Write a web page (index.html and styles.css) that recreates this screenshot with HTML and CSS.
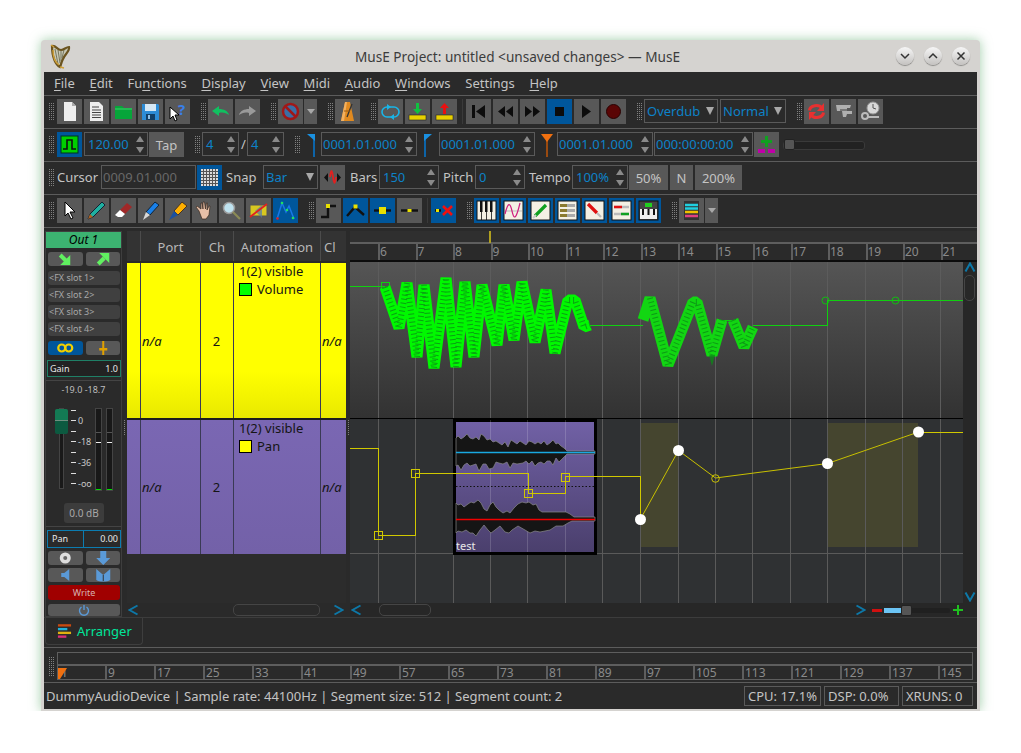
FILE: index.html
```html
<!DOCTYPE html>
<html lang="en">
<head>
    <meta charset="UTF-8">
    <title>MusE Project: untitled</title>
    <link rel="stylesheet" href="styles.css">
</head>
<body>
<div class="window">
    <!-- Title bar -->
    <div class="titlebar">
        <svg class="harp" viewBox="0 0 22 25" width="22" height="25">
            <path d="M3 2C7 1 8 6 12 6C15 6 17 3 20 3C21 7 16 10 14 15C12 19 12 21 11 23C7 21 3 14 3 2Z" fill="#c8c8b4"/>
            <path d="M6 5L9 20M9 6L11 19M12 7L12 17M15 6L13 14" stroke="#77775f" stroke-width="1"/>
            <path d="M3 2C7 1 8 6 12 6C15 6 17 3 20 3C21 7 16 10 14 15C12 19 12 21 11 23C7 21 3 14 3 2Z" fill="none" stroke="#6b5420" stroke-width="2.200"/>
            <path d="M2 1L5 3M11 23L15 24M4 6C4 14 7 19 10 21" fill="none" stroke="#d0a038" stroke-width="1.400"/>
        </svg>
        <span class="title-text">MusE Project: untitled &lt;unsaved changes&gt; — MusE</span>
        <div class="winbtns">
            <span class="winbtn"><svg viewBox="0 0 18 18" width="18" height="18"><path d="M5 7L9 11L13 7" fill="none" stroke="#333" stroke-width="1.500"/></svg></span>
            <span class="winbtn"><svg viewBox="0 0 18 18" width="18" height="18"><path d="M5 11L9 7L13 11" fill="none" stroke="#333" stroke-width="1.500"/></svg></span>
            <span class="winbtn"><svg viewBox="0 0 18 18" width="18" height="18"><path d="M5.500 5.500L12.500 12.500M12.500 5.500L5.500 12.500" fill="none" stroke="#333" stroke-width="1.500"/></svg></span>
        </div>
    </div>

    <div class="inner">
        <!-- Menu -->
        <div class="menubar">
            <span><u>F</u>ile</span><span><u>E</u>dit</span><span>Fu<u>n</u>ctions</span><span><u>D</u>isplay</span><span><u>V</u>iew</span><span><u>M</u>idi</span><span><u>A</u>udio</span><span><u>W</u>indows</span><span>Se<u>t</u>tings</span><span><u>H</u>elp</span>
        </div>

        <!-- Toolbar 1 -->
        <div class="toolrow">
            <i class="grip"></i>
            <b class="tb"><svg viewBox="0 0 25 25"><path d="M7 3h8l4 4v15H7z" fill="#eee"/><path d="M15 3v4h4z" fill="#aaa"/></svg></b>
            <b class="tb"><svg viewBox="0 0 25 25"><path d="M6 3h9l4 4v15H6z" fill="#eee"/><path d="M8 8h7M8 11h9M8 13.500h9M8 16h9M8 18.500h9" stroke="#444"/></svg></b>
            <b class="tb"><svg viewBox="0 0 25 25"><path d="M4 7h7l2 2h8v11H4z" fill="#07a53a"/><path d="M4 10h17" stroke="#3fd06b"/></svg></b>
            <b class="tb"><svg viewBox="0 0 25 25"><path d="M4 5h16l1 1v15H4z" fill="#2d8cd6"/><rect x="7" y="5" width="11" height="7" fill="#d6e8f5"/><rect x="8" y="15" width="9" height="6" fill="#123f66"/><rect x="10" y="16" width="2" height="4" fill="#8fc0e6"/></svg></b>
            <b class="tb"><svg viewBox="0 0 25 25"><path d="M5 8v12l3-3 2 5 2-1-2-5h4z" fill="#fff" stroke="#000"/><text x="13" y="16" class="qmark">?</text></svg></b>
            <i class="grip"></i>
            <b class="tb"><svg viewBox="0 0 25 25"><path d="M4 12l7-5v3c5 0 9 2 10 6-3-2-6-3-10-2v3z" fill="#10c060"/></svg></b>
            <b class="tb"><svg viewBox="0 0 25 25"><path d="M21 12l-7-5v3c-5 0-9 2-10 6 3-2 6-3 10-2v3z" fill="#9a9a9a"/></svg></b>
            <i class="grip"></i>
            <b class="tb"><svg viewBox="0 0 25 25"><circle cx="12.500" cy="12.500" r="7.500" fill="#3a6ea5" stroke="#a01818" stroke-width="2.500"/><path d="M7 7l11 11" stroke="#a01818" stroke-width="2.500"/></svg></b>
            <b class="tb-arrow"><em class="tri-d"></em></b>
            <i class="grip"></i>
            <b class="tb"><svg viewBox="0 0 25 25"><path d="M10 3h5l4 19H6z" fill="#e08a20"/><path d="M10 3h2L9 22H6z" fill="#f2b060"/><path d="M12 18L17 5" stroke="#333" stroke-width="1.300"/><path d="M9 12h6" stroke="#9a5a10"/></svg></b>
            <i class="grip"></i>
            <b class="tb"><svg viewBox="0 0 25 25"><rect x="4" y="8" width="17" height="10" rx="5" fill="none" stroke="#19b5e8" stroke-width="1.600"/><path d="M9 5l4 3-4 3zM16 15l-4 3 4 3z" fill="#19b5e8"/></svg></b>
            <b class="tb"><svg viewBox="0 0 25 25"><rect x="4" y="16" width="17" height="5" fill="#e8d000" stroke="#222" stroke-width=".6"/><path d="M11 4h3v6h3l-4.500 5L8 10h3z" fill="#10c040"/></svg></b>
            <b class="tb"><svg viewBox="0 0 25 25"><rect x="4" y="16" width="17" height="5" fill="#e8d000" stroke="#222" stroke-width=".6"/><path d="M11 15V9H8l4.500-5L17 9h-3v6z" fill="#e81010"/></svg></b>
            <i class="vsep"></i>
            <b class="tb"><svg viewBox="0 0 25 25"><path d="M6 6h3v13H6zM19 6v13l-9-6.500z" fill="#0c0c0c"/></svg></b>
            <b class="tb"><svg viewBox="0 0 25 25"><path d="M12 7v11l-7-5.500zM20 7v11l-7-5.500z" fill="#0c0c0c"/></svg></b>
            <b class="tb"><svg viewBox="0 0 25 25"><path d="M5 7v11l7-5.500zM13 7v11l7-5.500z" fill="#0c0c0c"/></svg></b>
            <b class="tb on"><svg viewBox="0 0 25 25"><rect x="8" y="8" width="9" height="9" fill="#0c0c0c"/></svg></b>
            <b class="tb"><svg viewBox="0 0 25 25"><path d="M8 6v13l9-6.500z" fill="#0c0c0c"/></svg></b>
            <b class="tb"><svg viewBox="0 0 25 25"><circle cx="12.500" cy="12.500" r="7" fill="#5a0505" stroke="#2a0202"/></svg></b>
            <i class="grip"></i>
            <div class="combo w74">Overdub<em class="tri-d big"></em></div>
            <div class="combo w66">Normal<em class="tri-d big"></em></div>
            <i class="grip"></i>
            <b class="tb"><svg viewBox="0 0 25 25"><path d="M5.500 11.500C6 6 15 5 18 9" fill="none" stroke="#e83030" stroke-width="3"/><path d="M20 4v8h-7z" fill="#e83030"/><path d="M19.500 13.500C19 19 10 20 7 16" fill="none" stroke="#e83030" stroke-width="3"/><path d="M5 21v-8h7z" fill="#e83030"/></svg></b>
            <b class="tb"><svg viewBox="0 0 25 25"><path d="M5 6h15l-1 3h-3v3h5v3h-5l-1 3h-3l-1-6H6z" fill="#b0b0b0"/><path d="M9 11h7" stroke="#777" stroke-width="2"/></svg></b>
            <b class="tb"><svg viewBox="0 0 25 25"><circle cx="15" cy="9" r="6" fill="#d8d8d8" stroke="#999"/><path d="M15 5v4l3 1" stroke="#555" fill="none"/><circle cx="7" cy="17" r="3" fill="none" stroke="#bbb" stroke-width="2"/><path d="M10 17h11v2H10z" fill="#bbb"/></svg></b>
        </div>

        <!-- Toolbar 2 -->
        <div class="toolrow">
            <i class="grip"></i>
            <b class="tb on"><svg viewBox="0 0 25 25"><rect x="4" y="4" width="17" height="17" fill="#00d000" stroke="#032"/><path d="M6 17h4V8h5v9h4" fill="none" stroke="#111" stroke-width="1.600"/></svg></b>
            <div class="spin w64">120.00<span class="arrows"></span></div>
            <b class="tb txt w35 pull">Tap</b>
            <i class="grip"></i>
            <div class="spin w37">4<span class="arrows"></span></div>
            <span class="slash">/</span>
            <div class="spin w37">4<span class="arrows"></span></div>
            <i class="grip"></i>
            <svg class="flag f1" viewBox="0 0 12 25" width="12" height="25"><path d="M10 2h2v23h-2z" fill="#0d64a8"/><path d="M12 2v7L4 2z" fill="#1a90e0"/></svg>
            <div class="spin w96 snug">0001.01.000<span class="arrows"></span></div>
            <svg class="flag f2" viewBox="0 0 12 25" width="12" height="25"><path d="M1 2h2v23H1z" fill="#0d64a8"/><path d="M1 2v7l8-7z" fill="#1a90e0"/></svg>
            <div class="spin w96 snug">0001.01.000<span class="arrows"></span></div>
            <svg class="flag f2" viewBox="0 0 12 25" width="12" height="25"><path d="M5 4h2v21H5z" fill="#9a4a10"/><path d="M0 2h12L6 10z" fill="#f07010"/></svg>
            <div class="spin w96 snug">0001.01.000<span class="arrows"></span></div>
            <div class="spin w99 snug pull">000:00:00:00<span class="arrows"></span></div>
            <b class="tb pull"><svg viewBox="0 0 25 25"><path d="M11 4h3v4h4v3h-4v4h-3v-4H7V8h4z" fill="#10a020"/><path d="M4 17h7v4H4zM14 17h7v4h-7z" fill="#c000a8"/></svg></b>
            <div class="hslider"><span class="knob"></span></div>
        </div>

        <!-- Toolbar 3 -->
        <div class="toolrow">
            <i class="grip"></i>
            <span class="label l-cursor">Cursor</span>
            <div class="spin w95 disabled">0009.01.000</div>
            <b class="tb on pull"><svg viewBox="0 0 25 25"><rect x="4" y="4" width="17" height="17" fill="#ddd"/><path d="M6.500 4v17M9.500 4v17M12.500 4v17M15.500 4v17M18.500 4v17M4 6.500h17M4 9.500h17M4 12.500h17M4 15.500h17M4 18.500h17" stroke="#555"/></svg></b>
            <span class="label l-snap">Snap</span>
            <div class="combo w54">Bar<em class="tri-d big"></em></div>
            <b class="tb"><svg viewBox="0 0 25 25"><path d="M4 12.500L8 8v9zM21 12.500L17 8v9z" fill="#111"/><path d="M10 12c1-8 2-8 3 0s2 8 3 0" fill="none" stroke="#e02020" stroke-width="1.800"/></svg></b>
            <span class="label l-bars">Bars</span>
            <div class="spin w60">150<span class="arrows"></span></div>
            <span class="label l-pitch">Pitch</span>
            <div class="spin w50">0<span class="arrows"></span></div>
            <span class="label l-tempo">Tempo</span>
            <div class="spin w56">100%<span class="arrows"></span></div>
            <b class="tb txt w39 pull">50%</b>
            <b class="tb txt w23">N</b>
            <b class="tb txt w47">200%</b>
        </div>

        <!-- Toolbar 4 -->
        <div class="toolrow">
            <i class="grip"></i>
            <b class="tb"><svg viewBox="0 0 25 25"><path d="M8 4v14l3-3 3 6 2-1-3-6h5z" fill="#fff" stroke="#000"/></svg></b>
            <b class="tb"><svg viewBox="0 0 25 25"><path d="M18 4l3 3L9 19l-5 2 2-5z" fill="#20b0a0" stroke="#123"/><path d="M4 21l2-5 3 3z" fill="#b06020"/></svg></b>
            <b class="tb"><svg viewBox="0 0 25 25"><path d="M16 5l5 4-7 7-5-4z" fill="#a02828"/><path d="M9 12l5 4-3 3H7l-3-2z" fill="#fff"/></svg></b>
            <b class="tb"><svg viewBox="0 0 25 25"><path d="M17 4l4 3-9 10-4-3z" fill="#1a80e8" stroke="#123"/><path d="M8 14l4 3-7 5z" fill="#d8d8d8"/></svg></b>
            <b class="tb"><svg viewBox="0 0 25 25"><path d="M17 4l5 4-9 9-4-4z" fill="#ffb000" stroke="#432"/><path d="M9 13l4 4-9 5z" fill="#1a50a0"/></svg></b>
            <b class="tb"><svg viewBox="0 0 25 25"><path d="M7 13L4 9l1-1 4 3V5h1l1 6V4h1.500l1 7 1-6h1l-.5 7 2-4h1l-1 9-3 4H10z" fill="#e8c0a8" stroke="#3a2a20" stroke-width=".7"/></svg></b>
            <b class="tb"><svg viewBox="0 0 25 25"><circle cx="10" cy="10" r="5.500" fill="#bfe3f0" stroke="#999" stroke-width="1.500"/><path d="M14 14l7 7" stroke="#8a8a55" stroke-width="2.200"/></svg></b>
            <b class="tb"><svg viewBox="0 0 25 25"><rect x="4" y="7" width="17" height="11" fill="#d8c820" stroke="#555"/><path d="M9 13l7-6v13z" fill="#5577aa" opacity=".7"/><path d="M4 19L21 6" stroke="#e02020" stroke-width="1.800"/></svg></b>
            <b class="tb on"><svg viewBox="0 0 25 25"><path d="M4 21L9 5l4 9 3-6 5 13" fill="none" stroke="#1878e8" stroke-width="1.500"/><circle cx="4.500" cy="20.500" r="1.300" fill="#e02020"/><circle cx="9" cy="5" r="1.300" fill="#20e060"/><circle cx="14" cy="12" r="1.300" fill="#20e060"/><circle cx="20" cy="20" r="1.300" fill="#20e060"/></svg></b>
            <i class="grip"></i>
            <b class="tb"><svg viewBox="0 0 25 25"><path d="M5 19h7V8h8" fill="none" stroke="#111" stroke-width="2.400"/><rect x="10" y="6" width="4" height="4" fill="#e8e000"/></svg></b>
            <b class="tb on"><svg viewBox="0 0 25 25"><path d="M4 18l8-9 9 8" fill="none" stroke="#111" stroke-width="2.400"/><rect x="10.500" y="6.500" width="4" height="4" fill="#e8e000"/></svg></b>
            <b class="tb on"><svg viewBox="0 0 25 25"><path d="M4 12.500h17" stroke="#111" stroke-width="2.400"/><rect x="9" y="9" width="7" height="7" fill="#e8e000"/></svg></b>
            <b class="tb"><svg viewBox="0 0 25 25"><path d="M4 12.500h17" stroke="#111" stroke-width="2.400"/><rect x="10.500" y="11" width="4" height="3" fill="#e8e000"/></svg></b>
            <i class="vsep"></i>
            <b class="tb on"><svg viewBox="0 0 25 25"><path d="M4 12.500h6" stroke="#111" stroke-width="2.400"/><rect x="5" y="11" width="3" height="3" fill="#e8e000"/><path d="M12 8l9 9M21 8l-9 9" stroke="#f01010" stroke-width="2.600"/></svg></b>
            <i class="grip"></i>
            <b class="tb on"><svg viewBox="0 0 25 25"><rect x="3" y="3" width="19" height="19" fill="#f4f0e4" stroke="#111"/><path d="M6 3h2.500v11H6zM11 3h2.500v11H11zM16 3h2.500v11H16z" fill="#111"/><path d="M7.500 14v8M12.500 14v8M17.500 14v8" stroke="#111" stroke-width=".8"/></svg></b>
            <b class="tb on"><svg viewBox="0 0 25 25"><rect x="3" y="3" width="19" height="19" fill="#f4f0e4" stroke="#111"/><path d="M4 13h17" stroke="#bbb"/><path d="M4 16c3-12 5-12 7-3s4 9 8-8" fill="none" stroke="#d02080" stroke-width="1.200"/></svg></b>
            <b class="tb on"><svg viewBox="0 0 25 25"><rect x="3" y="3" width="19" height="19" fill="#f4f0e4" stroke="#111"/><path d="M7 18L18 7" stroke="#10a020" stroke-width="3.200"/><path d="M5 20l3-3" stroke="#ccc" stroke-width="2"/></svg></b>
            <b class="tb on"><svg viewBox="0 0 25 25"><rect x="3" y="3" width="19" height="19" fill="#f4f0e4" stroke="#111"/><path d="M5 7.500h15M5 12.500h15M5 17.500h15" stroke="#aaa" stroke-width="3"/><path d="M5 7.500h7M5 12.500h7M5 17.500h7" stroke="#8a7a30" stroke-width="3"/></svg></b>
            <b class="tb on"><svg viewBox="0 0 25 25"><rect x="3" y="3" width="19" height="19" fill="#f4f0e4" stroke="#111"/><path d="M6 6l9 9" stroke="#e01010" stroke-width="3.200"/><path d="M15 15l4 4" stroke="#bbb" stroke-width="2.200"/></svg></b>
            <b class="tb on"><svg viewBox="0 0 25 25"><rect x="3" y="3" width="19" height="19" fill="#f4f0e4" stroke="#111"/><path d="M5 9h15M5 16h15" stroke="#bbb" stroke-width="2.500"/><path d="M5 9h8" stroke="#e01010" stroke-width="2.500"/><path d="M12 16h8" stroke="#10a020" stroke-width="2.500"/></svg></b>
            <b class="tb on"><svg viewBox="0 0 25 25"><rect x="3" y="3" width="19" height="19" fill="#444" stroke="#111"/><rect x="4" y="11" width="17" height="10" fill="#eee"/><path d="M6 11h2v6H6zM11.500 11h2v6h-2zM17 11h2v6h-2z" fill="#111"/><rect x="9" y="5" width="7" height="4" fill="#20d020"/></svg></b>
            <i class="grip"></i>
            <b class="tb"><svg viewBox="0 0 25 25"><rect x="5" y="3" width="15" height="19" fill="#333"/><path d="M6 7h13" stroke="#20d0e0" stroke-width="2.500"/><path d="M6 10.500h13" stroke="#20d0e0" stroke-width="2.500"/><path d="M6 14h13" stroke="#f0c000" stroke-width="2.500"/><path d="M6 18h13" stroke="#e04080" stroke-width="2.500"/></svg></b>
            <b class="tb-arrow"><em class="tri-d"></em></b>
        </div>

        <!-- Main area -->
        <div class="main">
            <div class="strip">
                <div class="strip-head">Out 1</div>
                <div class="sbtns mt4">
                    <b class="sb"><svg viewBox="0 0 34 14"><path d="M12 3l6 6" stroke="#60f060" stroke-width="4"/><path d="M22 3v10H12z" fill="#60f060"/></svg></b>
                    <b class="sb"><svg viewBox="0 0 34 14"><path d="M12 12l6-6" stroke="#60f060" stroke-width="4"/><path d="M13 1h10v10z" fill="#60f060"/></svg></b>
                </div>
                <div class="fx mt5">&lt;FX slot 1&gt;</div>
                <div class="fx">&lt;FX slot 2&gt;</div>
                <div class="fx">&lt;FX slot 3&gt;</div>
                <div class="fx">&lt;FX slot 4&gt;</div>
                <div class="sbtns mt5">
                    <b class="sb on"><svg viewBox="0 0 34 14"><circle cx="13.500" cy="7" r="3.500" fill="none" stroke="#f0d000" stroke-width="2.200"/><circle cx="20.500" cy="7" r="3.500" fill="none" stroke="#f0d000" stroke-width="2.200"/></svg></b>
                    <b class="sb"><svg viewBox="0 0 34 14"><path d="M16 0h2v14h-2zM13 7h8v2.500h-8z" fill="#e0a000"/></svg></b>
                </div>
                <div class="gain"><span>Gain</span><span>1.0</span></div>
                <div class="rule mt3"></div>
                <div class="dbs">-19.0 -18.7</div>
                <div class="fader-area">
                    <div class="fader"><span class="fader-knob"></span></div>
                    <div class="scale">
                        <span></span><span>0</span><span></span><span>-18</span><span></span><span>-36</span><span></span><span>-oo</span>
                    </div>
                    <div class="meter"></div>
                    <div class="meter"></div>
                </div>
                <div class="dbbox">0.0 dB</div>
                <div class="rule mt3"></div>
                <div class="pan"><span class="pan-l">Pan</span><span class="pan-r">0.00</span></div>
                <div class="sbtns mt3">
                    <b class="sb"><svg viewBox="0 0 34 14"><circle cx="17" cy="7" r="5.500" fill="#ddd"/><circle cx="17" cy="7" r="2" fill="#666"/></svg></b>
                    <b class="sb"><svg viewBox="0 0 34 14"><path d="M14 0h6v7h4l-7 7-7-7h4z" fill="#5a9ad8"/></svg></b>
                </div>
                <div class="sbtns mt3">
                    <b class="sb"><svg viewBox="0 0 34 14"><path d="M13 5h3l5-4v12l-5-4h-3z" fill="#5a9ad8"/></svg></b>
                    <b class="sb"><svg viewBox="0 0 34 14"><path d="M10 1l7 6 7-6v11c-3 2-11 2-14 0z" fill="#5a9ad8"/><path d="M17 7v6" stroke="#333"/></svg></b>
                </div>
                <div class="writebtn">Write</div>
                <b class="sb power"><svg viewBox="0 0 72 12"><path d="M33.500 3a4.500 4.500 0 1 0 5 0" fill="none" stroke="#5a9ad8" stroke-width="1.400"/><path d="M36 1v5" stroke="#5a9ad8" stroke-width="1.400"/></svg></b>
            </div>

            <i class="split wide"><i class="split-dots"></i></i>

            <div class="tracks">
                <div class="thead">
                    <span class="c0"></span><span class="c1">Port</span><span class="c2">Ch</span><span class="c3">Automation</span><span class="c4 clip">Cl</span>
                </div>
                <div class="trow yellow">
                    <span class="c0"></span>
                    <span class="c1 na">n/a</span>
                    <span class="c2 mid">2</span>
                    <span class="c3 auto"><span>1(2) visible</span><span class="ctrl"><em class="swatch green"></em>Volume</span></span>
                    <span class="c4 na">n/a</span>
                </div>
                <div class="trow purple">
                    <span class="c0"></span>
                    <span class="c1 na">n/a</span>
                    <span class="c2 mid">2</span>
                    <span class="c3 auto"><span>1(2) visible</span><span class="ctrl"><em class="swatch ylw"></em>Pan</span></span>
                    <span class="c4 na">n/a</span>
                </div>
                <div class="tfill"></div>
                <div class="hbar">
                    <svg class="chev" viewBox="0 0 10 12" width="10" height="12"><path d="M9.500 1.500L1.500 6L9.500 10.500"/></svg>
                    <span class="handle h-tracks"></span>
                    <svg class="chev" viewBox="0 0 10 12" width="10" height="12"><path d="M.5 1.500L8.500 6L.5 10.500"/></svg>
                </div>
            </div>

            <i class="split"><i class="split-dots"></i></i>

            <div class="arr">
                <div class="ruler">
                    <div class="ruler-top"></div>
                    <div class="ruler-marks">
                        <span class="lead"></span><span>6</span><span>7</span><span>8</span><span>9</span><span>10</span><span>11</span><span>12</span><span>13</span><span>14</span><span>15</span><span>16</span><span>17</span><span>18</span><span>19</span><span>20</span><span>21</span>
                    </div>
                    <i class="playhead"></i>
                </div>
                <div class="arr-body">
                    <svg class="canvas" viewBox="350 262 613 341" width="613" height="341">
                        <defs>
                            <linearGradient id="t1" x1="0" y1="0" x2="0" y2="1"><stop offset="0" stop-color="#555"/><stop offset="1" stop-color="#323232"/></linearGradient>
                            <linearGradient id="pt" x1="0" y1="0" x2="0" y2="1"><stop offset="0" stop-color="#7161a6"/><stop offset="1" stop-color="#4a3f6c"/></linearGradient>
                        </defs>
                        <rect x="350" y="262" width="613" height="156" fill="url(#t1)"/>
                        <rect x="350" y="419" width="613" height="184" fill="#2f3133"/>
                        <path d="M378.500 262V418M415.500 262V418M453.500 262V418M490.500 262V418M527.500 262V418M565.500 262V418M602.500 262V418M640.500 262V418M678.500 262V418M715.500 262V418M752.500 262V418M790.500 262V418M827.500 262V418M865.500 262V418M902.500 262V418M940.500 262V418" stroke="#5c5c5c"/>
                        <path d="M350 418.500H963" stroke="#000"/>
                        <rect x="640" y="423" width="38" height="124" fill="#45452f"/>
                        <rect x="827" y="423" width="91" height="124" fill="#45452f"/>
                        <path d="M378.500 419V603M415.500 419V603M453.500 419V603M490.500 419V603M527.500 419V603M565.500 419V603M602.500 419V603M640.500 419V603M678.500 419V603M715.500 419V603M752.500 419V603M790.500 419V603M827.500 419V603M865.500 419V603M902.500 419V603M940.500 419V603" stroke="#5a5a5a"/>
                        <path d="M350 553.500H963" stroke="#5a5a5a"/>

                        <!-- audio part -->
                        <rect x="454.500" y="420.500" width="141" height="133" fill="url(#pt)" stroke="#000" stroke-width="3"/>
                        <path d="M490.500 420V552M527.500 420V552M565.500 420V552" stroke="#fff" stroke-opacity=".16"/>
                        <path class="wav" d="M456 438L458 436L461 439L464 437L467 434L470 438L473 439L476 437L479 440L481 434L484 436L487 440L490 439L493 442L496 441L499 443L502 445L505 442L508 447L511 440L514 442L517 444L520 441L523 443L526 445L529 441L532 442L535 444L538 442L541 444L544 441L547 445L550 443L553 440L556 444L558 443L561 446L564 448L567 451L572 451L595 451L595 454L572 454L567 454L563 458L559 462L556 458L553 465L550 461L547 461L544 464L541 462L538 463L535 466L532 461L529 464L526 461L523 463L517 464L513 463L510 468L507 462L503 464L499 463L496 462L493 468L489 469L486 464L483 464L479 471L476 464L473 465L470 466L467 463L464 465L461 470L458 465L456 466Z"/>
                        <path d="M456 486.500H595" stroke="#111" stroke-dasharray="1.500 2"/>
                        <path class="wav" d="M456 503L458 505L461 504L464 507L468 504L471 502L474 503L478 500L481 503L484 509L487 511L490 505L493 502L496 507L499 510L503 513L507 511L510 513L514 508L518 504L522 502L526 503L529 502L533 505L536 504L539 510L542 512L566 512L570 514L574 517L595 517L595 521L572 521L568 523L563 526L556 526L550 530L545 531L540 532L535 531L530 533L525 530L518 526L512 530L509 533L505 532L500 526L495 530L491 533L488 530L484 525L480 530L476 536L473 533L470 533L466 530L462 532L458 531L456 533Z"/>
                        <path d="M456 452.500H595" stroke="#19a8e0" stroke-width="1.300"/>
                        <path d="M456 519.500H595" stroke="#f00000" stroke-width="1.300"/>
                        <text x="456" y="550" class="part-name">test</text>

                        <!-- volume automation -->
                        <path class="vol-line" d="M350 286.500H385M590 325.500H643M722 320.500H733M753 325.500H827.500V300.500H963"/>
                        <rect class="vol-line" x="381.500" y="282.500" width="8" height="8"/>
                        <path class="mesh" d="M385 287L399 328L407 283L417 357L424 285L434 368L446 278L456 367L465 282L474 357L482 285L497 345L504 285L514 340L522 282L535 342L546 290L555 353L568 300L575 300L584 327L590 325"/>
                        <path class="mesh-d" d="M385 287L399 328L407 283L417 357L424 285L434 368L446 278L456 367L465 282L474 357L482 285L497 345L504 285L514 340L522 282L535 342L546 290L555 353L568 300L575 300L584 327L590 325"/>
                        <path class="mesh dim" d="M643 320L650 298L668 365L693 302L697 302L712 355L722 320M733 320L744 347L753 327"/>
                        <path class="mesh-d" d="M650 298L668 365L693 302L697 302L712 355L722 320M733 320L744 347L753 327"/>
                        <circle cx="825.500" cy="300.500" r="3.500" fill="none" stroke="#10c010"/>
                        <circle cx="895.500" cy="300.500" r="3.500" fill="none" stroke="#10c010"/>

                        <!-- pan automation -->
                        <path class="pan-line" d="M350 448.500H378.500V535.500H415.500V473.500H528.500V493.500H565.500V476.500H640.500V519"/>
                        <path class="pan-thin" d="M640.500 519L678.500 450.500L715.500 478L827.500 463.500L918.500 432"/>
                        <path class="pan-line" d="M918.500 432.500H963"/>
                        <rect x="374.500" y="531.500" width="8" height="8" class="pan-line"/>
                        <rect x="411.500" y="469.500" width="8" height="8" class="pan-line"/>
                        <rect x="524.500" y="489.500" width="8" height="8" class="pan-line"/>
                        <rect x="561.500" y="473.500" width="8" height="8" class="pan-line"/>
                        <circle cx="640.500" cy="519.500" r="5.500" fill="#fff"/>
                        <circle cx="678.500" cy="450.500" r="5.500" fill="#fff"/>
                        <circle cx="715.500" cy="478.500" r="3.800" fill="none" stroke="#c8c000"/>
                        <circle cx="827.500" cy="463.500" r="5.500" fill="#fff"/>
                        <circle cx="918.500" cy="432" r="5.500" fill="#fff"/>
                    </svg>
                    <div class="vbar">
                        <svg class="chev" viewBox="0 0 12 10" width="12" height="10"><path d="M1.500 9.500L6 1.500L10.500 9.500"/></svg>
                        <span class="handle v-handle"></span>
                        <svg class="chev lower" viewBox="0 0 12 10" width="12" height="10"><path d="M1.500.5L6 8.500L10.500.5"/></svg>
                    </div>
                </div>
                <div class="hbar arr-bar">
                    <svg class="chev" viewBox="0 0 10 12" width="10" height="12"><path d="M9.500 1.500L1.500 6L9.500 10.500"/></svg>
                    <span class="handle h-arr"></span>
                    <svg class="chev end" viewBox="0 0 10 12" width="10" height="12"><path d="M.5 1.500L8.500 6L.5 10.500"/></svg>
                    <span class="minus"></span>
                    <div class="zoom"><span class="zoom-fill"></span><span class="knob"></span></div>
                    <svg class="plus" viewBox="0 0 10 10" width="10" height="10"><path d="M4 0h2v4h4v2H6v4H4V6H0V4h4z" fill="#20c020"/></svg>
                </div>
            </div>
        </div>

        <!-- Tabs -->
        <div class="tabbar">
            <div class="tab">
                <svg viewBox="0 0 16 16" width="15" height="16"><path d="M1 2h14" stroke="#c84a10" stroke-width="2.500"/><path d="M1 6h10" stroke="#20b0d8" stroke-width="2.500"/><path d="M1 10h14" stroke="#e0b010" stroke-width="2.500"/><path d="M1 14h9" stroke="#d83078" stroke-width="2.500"/></svg>
                <span>Arranger</span>
            </div>
        </div>

        <!-- Bottom ruler -->
        <div class="overview">
            <i class="grip tall"></i>
            <div class="ov-box">
                <div class="ov-top"></div>
                <div class="ov-marks">
                    <span class="first">1</span><span>9</span><span>17</span><span>25</span><span>33</span><span>41</span><span>49</span><span>57</span><span>65</span><span>73</span><span>81</span><span>89</span><span>97</span><span>105</span><span>113</span><span>121</span><span>129</span><span>137</span><span>145</span>
                </div>
                <svg class="ov-pos" viewBox="0 0 9 11" width="9" height="11"><path d="M0 0h9L2 11H0z" fill="#f07010"/></svg>
            </div>
        </div>

        <!-- Status bar -->
        <div class="statusbar">
            <span class="status-text">DummyAudioDevice | Sample rate: 44100Hz | Segment size: 512 | Segment count: 2</span>
            <span class="stat s-cpu">CPU: 17.1%</span>
            <span class="stat s-dsp">DSP: 0.0%</span>
            <span class="stat s-xr">XRUNS: 0</span>
        </div>
    </div>
</div>
</body>
</html>
```

FILE: styles.css
```css
/* General Styles */
body {
    font-family: "Noto Sans", sans-serif;
    font-size: 13px;
    background-color: #ffffff;
    margin: 0;
    padding: 40px 0 0 41px;
    color: #c4c4c4;
    overflow: hidden;
}

b, i, em {
    font-weight: normal;
    font-style: normal;
}

.window {
    width: 939px;
    height: 671px;
    background-color: #d5d3d0;
    border-radius: 4px 4px 0 0;
    box-shadow: 0 0 12px rgba(110, 180, 125, 0.65);
    display: flex;
    flex-direction: column;
}

/* Title bar */
.titlebar {
    height: 32px;
    flex: none;
    display: flex;
    align-items: center;
    position: relative;
    color: #3c3c3c;
    font-size: 13.6px;
}

.harp {
    margin-left: 8px;
}

.title-text {
    position: absolute;
    left: 314px;
    top: 7px;
}

.winbtns {
    margin-left: auto;
    margin-right: 10px;
    display: flex;
    gap: 10px;
}

.winbtn {
    width: 18px;
    height: 18px;
    border-radius: 50%;
    background: linear-gradient(#f6f6f6, #c4c2c0);
    box-shadow: 0 1px 1px rgba(0, 0, 0, 0.35);
}

.inner {
    flex: 1;
    margin: 0 3px 2px;
    background-color: #2a2a2a;
    display: flex;
    flex-direction: column;
    min-height: 0;
}

.menubar {
    flex: none;
    display: flex;
    align-items: center;
    gap: 14.7px;
    padding: 0 0 2px 10px;
    height: 21px;
    border-bottom: 1px solid #5c5c5c;
}

.menubar u {
    text-underline-offset: 2px;
}

/* Toolbars */
.toolrow {
    flex: none;
    display: flex;
    align-items: flex-start;
    gap: 2px;
    padding: 3px 0 0 4px;
    box-sizing: border-box;
    height: 33px;
    border-bottom: 1px solid #5c5c5c;
}

.grip {
    width: 6px;
    height: 17px;
    flex: none;
    margin: 4px 0 0 8px;
    background-image: conic-gradient(#808080 25%, transparent 0);
    background-size: 2px 2px;
}

.grip:first-child {
    margin-left: 0;
    margin-right: 1px;
}

.vsep {
    width: 1px;
    height: 25px;
    flex: none;
    margin: 0 1px 0 3px;
    background-color: #3a3a3a;
}

.tb {
    width: 25px;
    height: 25px;
    flex: none;
    background-color: #585858;
    display: flex;
    align-items: center;
    justify-content: center;
}

.tb svg {
    width: 25px;
    height: 25px;
}

.tb.on {
    background-color: #00569b;
}

.qmark {
    fill: #3a7fe8;
    font-size: 15px;
    font-weight: bold;
}

.pull {
    margin-left: -1px;
}

.w23 { width: 23px; }
.w35 { width: 35px; }
.w37 { width: 37px; }
.w39 { width: 39px; }
.w47 { width: 47px; }
.w50 { width: 50px; }
.w54 { width: 55px; }
.w56 { width: 56px; }
.w60 { width: 60px; }
.w64 { width: 64px; }
.w66 { width: 66px; }
.w74 { width: 74px; }
.w95 { width: 95px; }
.w96 { width: 96px; }
.w99 { width: 99px; }

.tb-arrow {
    width: 13px;
    height: 25px;
    flex: none;
    margin-left: -1px;
    background-color: #585858;
    display: flex;
    align-items: center;
    justify-content: center;
}

.tri-d {
    width: 0;
    height: 0;
    border-left: 4px solid transparent;
    border-right: 4px solid transparent;
    border-top: 5px solid #a8a8a8;
}

.tri-d.big {
    border-top-width: 8px;
    margin-left: auto;
}

.label {
    line-height: 25px;
    flex: none;
    color: #c4c4c4;
}

.l-cursor { width: 42px; }
.l-snap { width: 35px; margin-left: 2px; }
.l-bars { width: 27px; margin-left: 3px; }
.l-pitch { width: 30px; margin-left: 2px; }
.l-tempo { width: 41px; margin-left: 2px; }

.slash {
    width: 4px;
    flex: none;
    line-height: 25px;
    text-align: center;
}

.spin, .combo {
    height: 24px;
    flex: none;
    box-sizing: border-box;
    border: 1px solid #5a5a5a;
    color: #0d82c8;
    display: flex;
    align-items: center;
    white-space: nowrap;
}

.spin {
    padding: 0 3px 0 3px;
}

.spin.snug {
    padding-left: 1px;
}

.combo {
    padding: 0 3px 0 2px;
}

.spin.disabled {
    color: #686868;
    padding-left: 1px;
}

.arrows {
    margin-left: auto;
    width: 8px;
    height: 17px;
    flex: none;
    position: relative;
}

.arrows::before,
.arrows::after {
    content: "";
    position: absolute;
    left: 0;
    border-left: 4px solid transparent;
    border-right: 4px solid transparent;
}

.arrows::before {
    top: 0;
    border-bottom: 6px solid #8a8a8a;
}

.arrows::after {
    bottom: 0;
    border-top: 6px solid #8a8a8a;
}

.flag {
    flex: none;
}

.f1 { margin: 0 4px 0 1px; }
.f2 { margin: 0 2px 0 4px; }

.hslider {
    width: 80px;
    height: 7px;
    margin: 9px 0 0 2px;
    background-color: #222;
    border: 1px solid #3a3a3a;
    border-radius: 3px;
    position: relative;
}

.knob {
    position: absolute;
    left: 0;
    top: -3px;
    width: 11px;
    height: 11px;
    background-color: #555;
    border: 1px solid #222;
    border-radius: 2px;
    box-sizing: border-box;
}

/* Main area */
.main {
    height: 390px;
    flex: none;
    display: flex;
    padding-top: 3px;
    box-sizing: border-box;
    border-bottom: 1px solid #3c3c3c;
}

.strip {
    width: 77px;
    height: 386px;
    flex: none;
    margin-left: 1px;
    box-sizing: border-box;
    border: 1px solid #3e3e3e;
    display: flex;
    flex-direction: column;
    font-size: 9px;
    align-items: stretch;
}

.strip-head {
    height: 16px;
    flex: none;
    background-color: #3cb371;
    color: #000;
    font-style: italic;
    font-size: 12px;
    text-align: center;
    line-height: 16px;
}

.sbtns {
    display: flex;
    gap: 3px;
    padding: 0 1px 0 2px;
}

.mt3 { margin-top: 3px; }
.mt4 { margin-top: 4px; }
.mt5 { margin-top: 5px; }

.sb {
    flex: 1;
    height: 14px;
    border-radius: 3px;
    background-color: #585858;
    display: block;
    overflow: hidden;
}

.sb svg {
    display: block;
    width: 100%;
    height: 100%;
}

.sb.on {
    background-color: #00569b;
}

.sb.power {
    flex: none;
    height: 12px;
    margin: 4px 1px 0 2px;
}

.fx {
    height: 14px;
    margin: 3px 1px 0 2px;
    line-height: 13px;
    padding-left: 1px;
    background-color: #404040;
    border-radius: 3px;
    color: #a8a8a8;
}

.fx.mt5 {
    margin-top: 5px;
}

.gain {
    height: 17px;
    margin: 5px 0 0 1px;
    padding: 0 2px;
    box-sizing: border-box;
    border: 1px solid #1f7f66;
    display: flex;
    justify-content: space-between;
    align-items: center;
    color: #e8e8e8;
    background-color: #222;
}

.rule {
    height: 1px;
    flex: none;
    background-color: #444;
}

.dbs {
    margin-top: 2px;
    height: 14px;
    line-height: 14px;
    text-align: center;
    color: #bdbdbd;
}

.fader-area {
    position: relative;
    height: 84px;
    margin-top: 11px;
    display: flex;
    flex: none;
}

.fader {
    width: 5px;
    height: 81px;
    margin-left: 13px;
    background-color: #191919;
    border: 1px solid #444;
    box-sizing: border-box;
    position: relative;
}

.fader-knob {
    position: absolute;
    left: -5px;
    top: 0;
    width: 13px;
    height: 25px;
    background: linear-gradient(#137a54 0 11px, #6f8f80 11px 12px, #0c5a40 12px);
    border-radius: 2px;
}

.scale {
    width: 24px;
    margin: -2px 0 0 7px;
    height: 82px;
    display: flex;
    flex-direction: column;
    justify-content: space-between;
    line-height: 9px;
    font-size: 9px;
    color: #c8c8c8;
    white-space: nowrap;
}

.scale span {
    height: 9px;
    display: flex;
    align-items: center;
    gap: 2px;
}

.scale span::before {
    content: "";
    width: 5px;
    height: 1px;
    flex: none;
    background-color: #dddddd;
}

.meter {
    width: 7px;
    height: 83px;
    margin-left: 4px;
    box-sizing: border-box;
    border: 1px solid #444;
    background:
        linear-gradient(#eee, #eee) 0 33px / 100% 1px no-repeat,
        linear-gradient(#00e000, #00e000) 0 bottom / 100% 1px no-repeat,
        linear-gradient(#555, #555) 0 23px / 100% 1px no-repeat,
        #181818;
}

.scale + .meter {
    margin-left: 0;
}

.dbbox {
    width: 40px;
    height: 20px;
    margin: 11px 0 0 18px;
    background-color: #3c3c3c;
    border-radius: 3px;
    text-align: center;
    line-height: 20px;
    color: #a8a8a8;
    font-size: 10px;
}

.pan {
    height: 18px;
    margin: 3px 0 0 1px;
    display: flex;
    box-sizing: border-box;
    border: 1px solid #0c7cb0;
    color: #e8e8e8;
    line-height: 16px;
}

.pan-l {
    width: 36px;
    padding-left: 4px;
    box-sizing: border-box;
    border-right: 1px solid #0c7cb0;
}

.pan-r {
    flex: 1;
    text-align: right;
    padding-right: 2px;
}

.writebtn {
    height: 15px;
    margin: 3px 1px 0 2px;
    background-color: #a00000;
    border-radius: 3px;
    text-align: center;
    line-height: 15px;
    color: #d8b0b0;
}

.split {
    width: 4px;
    flex: none;
    position: relative;
}

.split.wide {
    width: 5px;
}

.split-dots {
    position: absolute;
    left: 1px;
    top: 189px;
    width: 3px;
    height: 15px;
    background-image: conic-gradient(#808080 25%, transparent 0);
    background-size: 2px 2px;
}

/* Track list */
.tracks {
    width: 219px;
    height: 386px;
    flex: none;
    display: flex;
    flex-direction: column;
    box-sizing: border-box;
}

.thead, .trow {
    display: flex;
    flex: none;
}

.thead {
    height: 30px;
    margin-bottom: 2px;
    background-color: #333;
    align-items: stretch;
    color: #b8b8b8;
}

.thead span {
    display: flex;
    align-items: center;
    justify-content: center;
    padding-top: 1px;
    border-right: 1px solid #4c4c4c;
    box-sizing: border-box;
}

.c0 { width: 14px; flex: none; }
.c1 { width: 60px; flex: none; }
.c2 { width: 33px; flex: none; }
.c3 { width: 87px; flex: none; }
.c4 { width: 25px; flex: none; overflow: hidden; }

.thead .clip {
    border-right: 0;
    justify-content: flex-start;
    padding-left: 3px;
    overflow: hidden;
}

.trow {
    color: #151515;
    box-sizing: border-box;
    border-bottom: 2px solid #1d1d1d;
}

.trow > span {
    box-sizing: border-box;
    border-right: 1px solid #3a3a55;
}

.trow > span:last-child {
    border-right: 0;
}

.yellow {
    height: 157px;
    background: linear-gradient(#ffff00 70%, #e9e900);
}

.purple {
    height: 134px;
    border-bottom: 0;
    background: linear-gradient(#7a67b3, #7361a8);
}

.na {
    font-style: italic;
    display: flex;
    align-items: center;
    padding-left: 1px;
}

.mid {
    display: flex;
    align-items: center;
    justify-content: center;
    padding-right: 1px;
}

.auto {
    display: flex;
    flex-direction: column;
    padding: 0 0 0 5px;
    line-height: 18px;
}

.auto > span:first-child {
    margin-top: -1px;
}

.ctrl {
    display: flex;
    align-items: center;
    gap: 5px;
}

.swatch {
    width: 13px;
    height: 13px;
    box-sizing: border-box;
    border: 1px solid #000;
}

.swatch.green { background-color: #00ff00; }
.swatch.ylw { background-color: #ffff00; }

.tfill {
    flex: 1;
    background-color: #2c2c2c;
}

.hbar {
    height: 14px;
    flex: none;
    display: flex;
    align-items: center;
    position: relative;
}

.chev {
    flex: none;
    display: block;
}

.chev path {
    fill: none;
    stroke: #0d78a8;
    stroke-width: 2;
}

.tracks .hbar {
    justify-content: space-between;
    padding: 0 2px 0 1px;
}

.handle {
    display: block;
    box-sizing: border-box;
    border: 1px solid #454545;
    border-radius: 5px;
}

.h-tracks {
    position: absolute;
    left: 106px;
    top: 1px;
    width: 87px;
    height: 12px;
}

/* Arranger */
.arr {
    flex: 1;
    min-width: 0;
    display: flex;
    flex-direction: column;
}

.ruler {
    height: 31px;
    flex: none;
    position: relative;
    box-sizing: border-box;
    border-bottom: 2px solid #0c0c0c;
}

.ruler-top {
    height: 11px;
    background-color: #2f2f2f;
}

.ruler-marks {
    height: 18px;
    display: flex;
    border-top: 2px solid #5e5e5e;
    box-sizing: border-box;
    font-size: 12px;
    color: #8a8a8a;
    line-height: 15px;
}

.ruler-marks span {
    width: 37.5px;
    flex: none;
    box-sizing: border-box;
    border-left: 2px solid #5e5e5e;
}

.ruler-marks .lead {
    width: 28px;
    border-left: 0;
}

.playhead {
    position: absolute;
    left: 139px;
    top: 0;
    width: 2px;
    height: 12px;
    background-color: #b0a020;
}

.arr-body {
    display: flex;
    height: 341px;
    flex: none;
}

.canvas {
    flex: none;
    display: block;
}

.wav {
    fill: #151515;
    stroke: #8a8a8a;
    stroke-width: 0.7;
}

.part-name {
    font-size: 11px;
    fill: #e8e8e8;
}

.vol-line {
    fill: none;
    stroke: #10d010;
    shape-rendering: crispEdges;
}

.mesh {
    fill: none;
    stroke: #00f800;
    stroke-width: 11;
    stroke-linejoin: bevel;
}

.mesh.dim {
    stroke: #12d612;
}

.mesh-d {
    fill: none;
    stroke: #0c8a18;
    stroke-width: 6;
    stroke-dasharray: 1 3;
    opacity: 0.8;
}

.pan-line {
    fill: none;
    stroke: #d0c800;
    shape-rendering: crispEdges;
}

.pan-thin {
    fill: none;
    stroke: #c8c000;
}

.vbar {
    width: 14px;
    background-color: #272727;
    position: relative;
}

.vbar .chev {
    position: absolute;
    left: 1px;
    top: 0;
}

.vbar .lower {
    top: auto;
    bottom: 1px;
}

.v-handle {
    position: absolute;
    left: 1px;
    top: 13px;
    width: 11px;
    height: 26px;
}

.arr-bar {
    padding: 0 14px 0 1px;
    background-color: #272727;
}

.h-arr {
    width: 52px;
    height: 12px;
    margin-left: 18px;
}

.chev.end {
    margin-left: auto;
}

.minus {
    width: 10px;
    height: 3px;
    margin-left: 6px;
    background-color: #d01010;
}

.zoom {
    width: 66px;
    height: 5px;
    margin: 0 3px 0 2px;
    position: relative;
    background-color: #202020;
    border-radius: 2px;
}

.zoom-fill {
    display: block;
    width: 17px;
    height: 5px;
    background-color: #6cc4f4;
}

.zoom .knob {
    left: 17px;
    top: -3px;
}

.plus {
    flex: none;
}

/* Tabs */
.tabbar {
    height: 30px;
    flex: none;
    box-sizing: border-box;
    border-bottom: 1px solid #5c5c5c;
}

.tab {
    width: 98px;
    height: 27px;
    margin-left: 1px;
    box-sizing: border-box;
    border: 1px solid #3e3e3e;
    border-top: 0;
    border-radius: 0 0 4px 4px;
    display: flex;
    align-items: center;
    gap: 5px;
    padding-left: 11px;
    color: #00e69a;
}

/* Overview ruler */
.overview {
    height: 35px;
    flex: none;
    box-sizing: border-box;
    border-bottom: 1px solid #5c5c5c;
    padding: 4px 4px 0 4px;
    display: flex;
    gap: 3px;
}

.grip.tall {
    height: 19px;
    margin: 5px 0 0 0;
}

.ov-box {
    flex: 1;
    min-width: 0;
    height: 28px;
    box-sizing: border-box;
    border: 1px solid #5e5e5e;
    position: relative;
}

.ov-top {
    height: 11px;
    border-bottom: 2px solid #5e5e5e;
}

.ov-marks {
    display: flex;
    font-size: 12px;
    color: #8a8a8a;
    line-height: 13px;
}

.ov-marks span {
    width: 49px;
    flex: none;
    box-sizing: border-box;
    border-left: 2px solid #5e5e5e;
    padding-left: 1px;
}

.ov-marks .first {
    width: 47px;
    border-left: 0;
    padding-left: 3px;
}

.ov-marks span:last-child {
    width: 34px;
}

.ov-pos {
    position: absolute;
    left: 0;
    top: 15px;
}

/* Status bar */
.statusbar {
    flex: 1;
    display: flex;
    align-items: center;
    padding: 0 4px 0 2px;
    gap: 3px;
    color: #c4c4c4;
}

.status-text {
    margin-right: auto;
}

.stat {
    height: 20px;
    box-sizing: border-box;
    border: 1px solid #5a5a5a;
    line-height: 18px;
    padding-left: 3px;
    white-space: nowrap;
}

.s-cpu { width: 77px; }
.s-dsp { width: 75px; }
.s-xr { width: 71px; }
```
